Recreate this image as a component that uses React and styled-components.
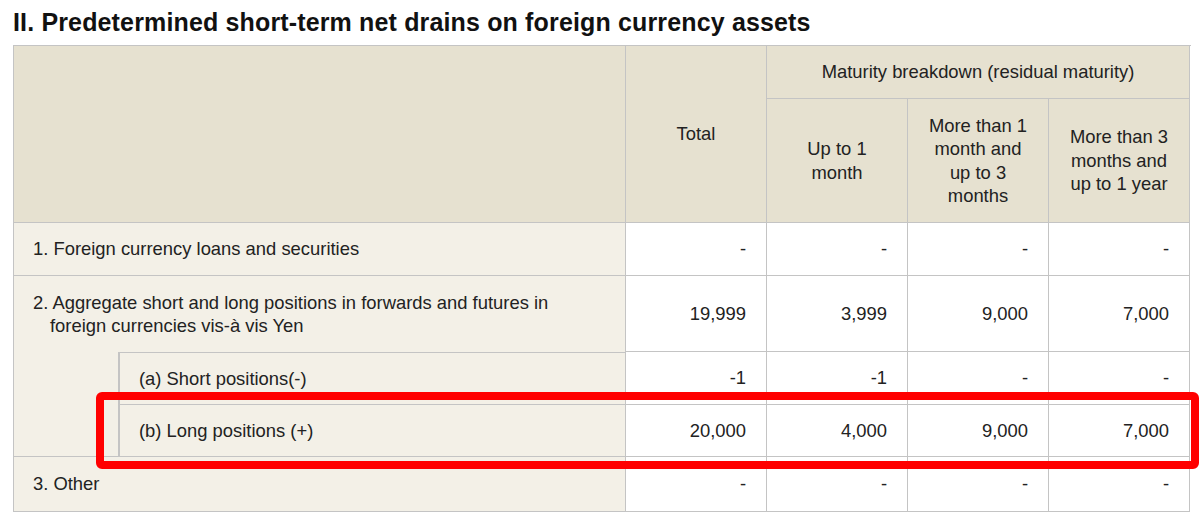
import React from 'react'
import styled, { createGlobalStyle } from 'styled-components'

const GlobalStyle = createGlobalStyle`
  body {
    margin: 0;
    background: #fff;
    font-family: "Liberation Sans", Arial, sans-serif;
    color: #222;
  }
`

const Page = styled.div`
  position: relative;
  padding: 7px 0 0 13px;
`

const Title = styled.h2`
  margin: 0 0 8px;
  font-size: 25px;
  line-height: 30px;
  letter-spacing: 0.15px;
  font-weight: bold;
  color: #111;
`

const Grid = styled.div`
  display: grid;
  width: 1177px;
  grid-template-columns: 105px 507px 141px 141px 141px 141px;
  grid-template-rows: 53px 124px 53px 76px 53px 52px 55px;
  border-top: 1px solid #c4c4c4;
  border-left: 1px solid #c4c4c4;
  font-size: 18.4px;
  line-height: 23.5px;
`

const Cell = styled.div`
  box-sizing: border-box;
  border-right: 1px solid #c4c4c4;
  border-bottom: ${p => (p.$noBottom ? 'none' : '1px solid #c4c4c4')};
  display: flex;
  align-items: center;
`

const Head = styled(Cell)`
  background: #e6e1d0;
  justify-content: center;
  text-align: center;
  padding: 0 16px;
`

const Label = styled(Cell)`
  background: #f3f0e7;
  padding: 0 19px;
`

const SubLabel = styled(Label)`
  border-left: 1px solid #c4c4c4;
  border-top: ${p => (p.$top ? '1px solid #c4c4c4' : 'none')};
`

const Value = styled(Cell)`
  background: #fff;
  justify-content: flex-end;
  padding: 0 20px;
`

const Hanging = styled.span`
  display: block;
  padding-left: 17px;
  text-indent: -17px;
  padding-right: 30px;
`

const Highlight = styled.div`
  position: absolute;
  left: 96px;
  top: 392px;
  width: 1103px;
  height: 77px;
  box-sizing: border-box;
  border: 8px solid #ff0000;
  border-radius: 6px;
  pointer-events: none;
`

const rows = [
  { label: '1. Foreign currency loans and securities', values: ['-', '-', '-', '-'] },
  {
    label: '2. Aggregate short and long positions in forwards and futures in foreign currencies vis-à vis Yen',
    values: ['19,999', '3,999', '9,000', '7,000'],
    hanging: true,
  },
]

const subRows = [
  { label: '(a) Short positions(-)', values: ['-1', '-1', '-', '-'] },
  { label: '(b) Long positions (+)', values: ['20,000', '4,000', '9,000', '7,000'] },
]

export default function App() {
  return (
    <Page>
      <GlobalStyle />
      <Title>II. Predetermined short-term net drains on foreign currency assets</Title>
      <Grid>
        <Head style={{ gridColumn: '1 / 3', gridRow: '1 / 3' }} />
        <Head style={{ gridColumn: '3', gridRow: '1 / 3' }}>Total</Head>
        <Head style={{ gridColumn: '4 / 7' }}>Maturity breakdown (residual maturity)</Head>
        <Head>Up to 1 month</Head>
        <Head>More than 1 month and up to 3 months</Head>
        <Head>More than 3 months and up to 1 year</Head>

        {rows.map(r => (
          <React.Fragment key={r.label}>
            <Label style={{ gridColumn: '1 / 3' }} $noBottom={r.hanging}>
              {r.hanging ? <Hanging>{r.label}</Hanging> : r.label}
            </Label>
            {r.values.map((v, i) => <Value key={i}>{v}</Value>)}
          </React.Fragment>
        ))}

        <Label style={{ gridColumn: '1', gridRow: '5 / 7' }} />
        {subRows.map((r, idx) => (
          <React.Fragment key={r.label}>
            <SubLabel style={{ gridColumn: '2' }} $top={idx === 0}>{r.label}</SubLabel>
            {r.values.map((v, i) => <Value key={i}>{v}</Value>)}
          </React.Fragment>
        ))}

        <Label style={{ gridColumn: '1 / 3' }}>3. Other</Label>
        {['-', '-', '-', '-'].map((v, i) => <Value key={i}>{v}</Value>)}
      </Grid>
      <Highlight />
    </Page>
  )
}
